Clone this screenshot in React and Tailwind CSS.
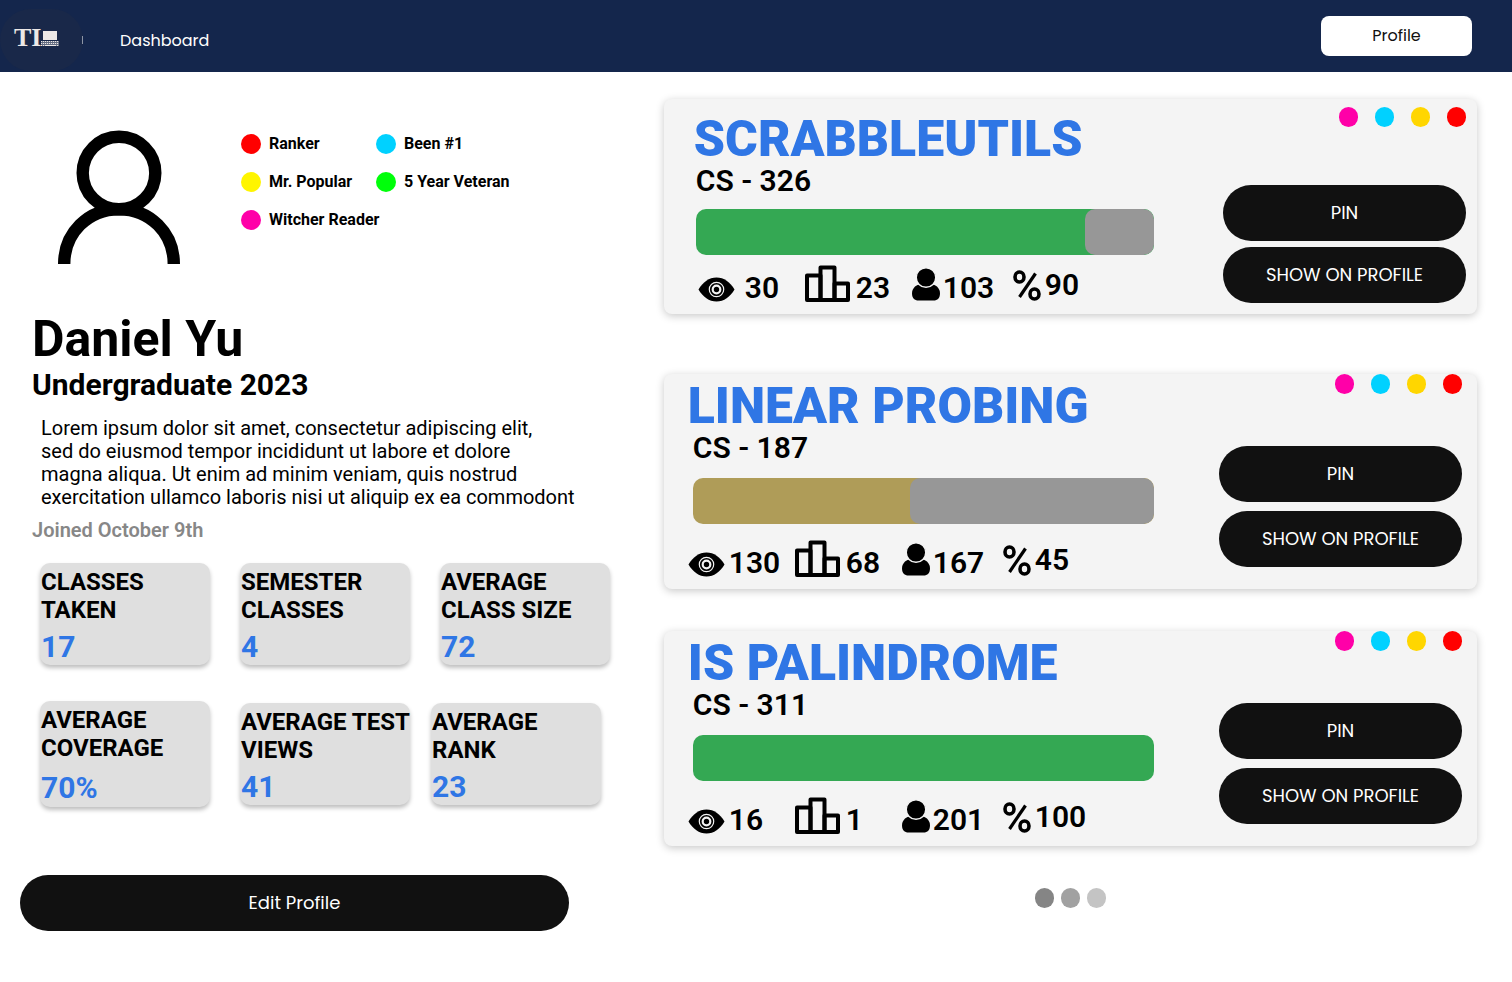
const badges = [
  { label: "Ranker", color: "bg-[#ff0000]" },
  { label: "Been #1", color: "bg-[#00d1ff]" },
  { label: "Mr. Popular", color: "bg-[#fff500]" },
  { label: "5 Year Veteran", color: "bg-[#00ff0a]" },
  { label: "Witcher Reader", color: "bg-[#ff00a8]" },
];

const statRows = [
  {
    columns: "grid-cols-[200px_200px_170px]",
    items: [
      { lines: ["CLASSES", "TAKEN"], value: "17" },
      { lines: ["SEMESTER", "CLASSES"], value: "4" },
      { lines: ["AVERAGE", "CLASS SIZE"], value: "72" },
    ],
  },
  {
    columns: "grid-cols-[200px_191px_170px]",
    items: [
      { lines: ["AVERAGE", "COVERAGE"], value: "70%", tall: true },
      { lines: ["AVERAGE TEST", "VIEWS"], value: "41" },
      { lines: ["AVERAGE", "RANK"], value: "23" },
    ],
  },
];

const cards = [
  {
    title: "SCRABBLEUTILS",
    course: "CS - 326",
    views: 30,
    rank: 23,
    users: 103,
    percent: 90,
    fill: 85,
    tone: "bg-[#34a853]",
    roomy: true,
  },
  {
    title: "LINEAR PROBING",
    course: "CS - 187",
    views: 130,
    rank: 68,
    users: 167,
    percent: 45,
    fill: 47,
    tone: "bg-[#af9c58]",
  },
  {
    title: "IS PALINDROME",
    course: "CS - 311",
    views: 16,
    rank: 1,
    users: 201,
    percent: 100,
    fill: 100,
    tone: "bg-[#34a853]",
  },
];

const cardDots = ["bg-[#ff00a8]", "bg-[#00d1ff]", "bg-[#ffd600]", "bg-[#ff0000]"];

function EyeIcon() {
  return (
    <svg viewBox="0 0 37 42" className="h-[42px] w-[37px] shrink-0" aria-hidden="true">
      <path d="M0.5 25.500C5 18 11 13.500 18.500 13.500S32 18 36.500 25.500C32 33 26 37.500 18.500 37.500S5 33 0.500 25.500Z" />
      <circle cx="18.500" cy="25.500" r="7.200" fill="none" stroke="#f4f4f4" strokeWidth="1.200" />
      <circle cx="18.500" cy="25.500" r="3.800" fill="none" stroke="#f4f4f4" strokeWidth="2.200" />
    </svg>
  );
}

function PodiumIcon() {
  return (
    <svg viewBox="0 0 45 42" className="h-[42px] w-[45px] shrink-0" fill="none" stroke="#000" strokeWidth="4" strokeLinejoin="round" aria-hidden="true">
      <path d="M2 11.500H15.500V36H2Z" />
      <path d="M15.500 3.500H29.500V36H15.500Z" />
      <path d="M29.500 19.500H43V36H29.500Z" />
    </svg>
  );
}

function PersonIcon() {
  return (
    <svg viewBox="0 0 28 42" className="h-[42px] w-[28px] shrink-0" aria-hidden="true">
      <path d="M7 20.500H21C25 21.500 28 25 28 29.500C28 34 25.500 36.500 21.500 36.500H6.500C2.500 36.500 0 34 0 29.500C0 25 3 21.500 7 20.500Z" />
      <circle cx="14" cy="13.500" r="9.800" stroke="#f4f4f4" strokeWidth="1.500" />
    </svg>
  );
}

function PercentIcon() {
  return (
    <svg viewBox="0 0 28 36" className="h-9 w-7 shrink-0" fill="none" stroke="#000" strokeWidth="3.600" aria-hidden="true">
      <ellipse cx="6.500" cy="10" rx="4.500" ry="5" />
      <ellipse cx="21.500" cy="27" rx="4.500" ry="5" />
      <path d="M22.500 6.500L6.500 30" strokeWidth="3.200" />
    </svg>
  );
}

function TestCard({ card }) {
  const { roomy } = card;
  return (
    <article
      className={`flex rounded-lg bg-[#f4f4f4] pb-2 shadow-[0_2px_8px_rgba(0,0,0,0.22)] ${
        roomy ? "gap-[69px] pr-[11px] pl-[30px]" : "gap-[65px] pr-[15px] pl-6"
      }`}
    >
      <div className={`min-w-0 flex-1 ${roomy ? "pt-[14px]" : "pt-1.5"}`}>
        <h2 className="text-[50px] leading-[52px] font-black whitespace-nowrap text-[#2f76e5]">{card.title}</h2>
        <p className={`text-[30px] leading-8 font-semibold ${roomy ? "pl-0.5" : "pl-[5px]"}`}>{card.course}</p>
        <div className={roomy ? "mt-3 pl-0.5" : "mt-[14px] pl-[5px]"}>
          <div className={`flex h-[46px] justify-end overflow-hidden rounded-[10px] ${card.tone}`}>
            <div className="rounded-[10px] bg-[#979797]" style={{ width: `${100 - card.fill}%` }} />
          </div>
        </div>
        <div
          className={`grid grid-cols-[107px_107px_101px_auto] items-end text-[30px] leading-9 font-semibold ${
            roomy ? "mt-[9px] pl-1" : "mt-[15px]"
          }`}
        >
          <span className={`flex items-end ${roomy ? "gap-2.5" : "gap-1"}`}>
            <EyeIcon />
            {card.views}
          </span>
          <span className="flex items-end gap-1.5">
            <PodiumIcon />
            {card.rank}
          </span>
          <span className="flex items-end gap-[3px]">
            <PersonIcon />
            {card.users}
          </span>
          <span className="flex items-end gap-1 pb-[3px]">
            <PercentIcon />
            {card.percent}
          </span>
        </div>
      </div>
      <div className={`flex w-[243px] shrink-0 flex-col ${roomy ? "pt-2" : ""}`}>
        <div className="flex justify-end gap-[17px]">
          {cardDots.map((dot) => (
            <span key={dot} className={`h-5 w-[19px] rounded-full ${dot}`} />
          ))}
        </div>
        <div className={`flex flex-col font-[Poppins,Inter,sans-serif] text-[18px] text-white ${roomy ? "mt-[58px] gap-1.5" : "mt-[52px] gap-[9px]"}`}>
          <button type="button" className="h-14 rounded-full bg-[#111111] pb-px">PIN</button>
          <button type="button" className="h-14 rounded-full bg-[#111111] pb-px">SHOW ON PROFILE</button>
        </div>
      </div>
    </article>
  );
}

function Logo() {
  return (
    <a href="#home" aria-label="Home" className="flex h-[62px] w-[83px] items-center rounded-full bg-[#192849] pl-[14px] text-[#ece8e6]">
      <span className="pb-1 font-['Liberation_Serif',serif] text-[26px] leading-8 font-bold">TI</span>
      <svg viewBox="0 0 18 20" className="h-5 w-[18px]" aria-hidden="true">
        <rect x="2" y="1" width="14" height="9" fill="currentColor" />
        <path d="M0 11.500H18M0 13.500H18M0 15.500H18" stroke="currentColor" strokeWidth="1" strokeDasharray="1.200 0.800" />
        <path d="M0 11H18V16H0Z" fill="currentColor" opacity="0.35" />
        <path d="M4 15.500H14" stroke="currentColor" strokeWidth="1" />
      </svg>
      <span className="ml-auto h-2 w-px bg-[#8d95a5]" />
    </a>
  );
}

export default function App() {
  return (
    <div className="min-h-screen bg-white font-[Roboto,sans-serif] text-black">
      <header className="flex h-[72px] items-center bg-[#14264c] pr-10 font-[Poppins,Inter,sans-serif] text-base">
        <div className="pt-2">
          <Logo />
        </div>
        <nav className="ml-[37px] pt-2.5">
          <a href="#dashboard" className="text-white">Dashboard</a>
        </nav>
        <button type="button" className="ml-auto h-10 w-[151px] rounded-lg bg-white text-[#111111]">Profile</button>
      </header>

      <main className="flex">
        <section className="w-[43.9%] shrink-0 pt-[58px] pl-8">
          <div className="flex pl-[26px]">
            <svg viewBox="0 0 122 134" className="h-[134px] w-[122px] shrink-0" fill="none" stroke="#000" strokeWidth="12.400" role="img" aria-label="Avatar">
              <circle cx="61" cy="43" r="36.300" />
              <path d="M6.200 134C6.200 103 30 79.200 61 79.200S115.800 103 115.800 134" />
            </svg>
            <ul className="ml-[61px] grid grid-cols-[135px_auto] content-start gap-y-[18px] pt-1 text-base leading-5 font-bold whitespace-nowrap">
              {badges.map((badge) => (
                <li key={badge.label} className="flex items-center gap-2">
                  <span className={`size-5 shrink-0 rounded-full ${badge.color}`} />
                  {badge.label}
                </li>
              ))}
            </ul>
          </div>

          <h1 className="mt-[47px] text-[50px] leading-[56px] font-bold">Daniel Yu</h1>
          <p className="text-[30px] leading-9 font-bold">Undergraduate 2023</p>
          <p className="mt-[14px] pl-[9px] text-[20px] leading-[23px]">
            Lorem ipsum dolor sit amet, consectetur adipiscing elit,
            <br />
            sed do eiusmod tempor incididunt ut labore et dolore
            <br />
            magna aliqua. Ut enim ad minim veniam, quis nostrud
            <br />
            exercitation ullamco laboris nisi ut aliquip ex ea commodont
          </p>
          <p className="mt-[9px] text-[20px] leading-6 font-semibold text-[#878787]">Joined October 9th</p>

          <div className="mt-[21px] flex flex-col gap-9 pl-2">
            {statRows.map((row) => (
              <div key={row.columns} className={`grid items-center ${row.columns}`}>
                {row.items.map((stat) => (
                  <div
                    key={stat.lines.join(" ")}
                    className={`w-[170px] rounded-[10px] bg-[#dfdfdf] pt-[5px] pl-px shadow-[0_3px_4px_rgba(0,0,0,0.25)] ${stat.tall ? "pb-px" : "pb-0"}`}
                  >
                    <h3 className="text-[24px] leading-7 font-bold whitespace-nowrap">
                      {stat.lines[0]}
                      <br />
                      {stat.lines[1]}
                    </h3>
                    <p className={`text-[30px] leading-9 font-bold text-[#2f76e5] ${stat.tall ? "mt-2" : "mt-[5px]"}`}>{stat.value}</p>
                  </div>
                ))}
              </div>
            ))}
          </div>

          <button type="button" className="mt-[68px] -ml-3 h-14 w-[549px] rounded-full bg-[#111111] pb-px font-[Poppins,Inter,sans-serif] text-[18px] text-white">
            Edit Profile
          </button>
        </section>

        <section className="min-w-0 flex-1 pt-[27px] pr-[35px]">
          <TestCard card={cards[0]} />
          <div className="mt-[60px] flex flex-col gap-[42px]">
            <TestCard card={cards[1]} />
            <TestCard card={cards[2]} />
          </div>
          <div className="mt-[42px] flex justify-center gap-[7px]">
            <button type="button" aria-label="Page 1" className="h-5 w-[19px] rounded-full bg-[#858585]" />
            <button type="button" aria-label="Page 2" className="h-5 w-[19px] rounded-full bg-[#a1a1a1]" />
            <button type="button" aria-label="Page 3" className="h-5 w-[19px] rounded-full bg-[#c4c4c4]" />
          </div>
        </section>
      </main>
    </div>
  );
}
